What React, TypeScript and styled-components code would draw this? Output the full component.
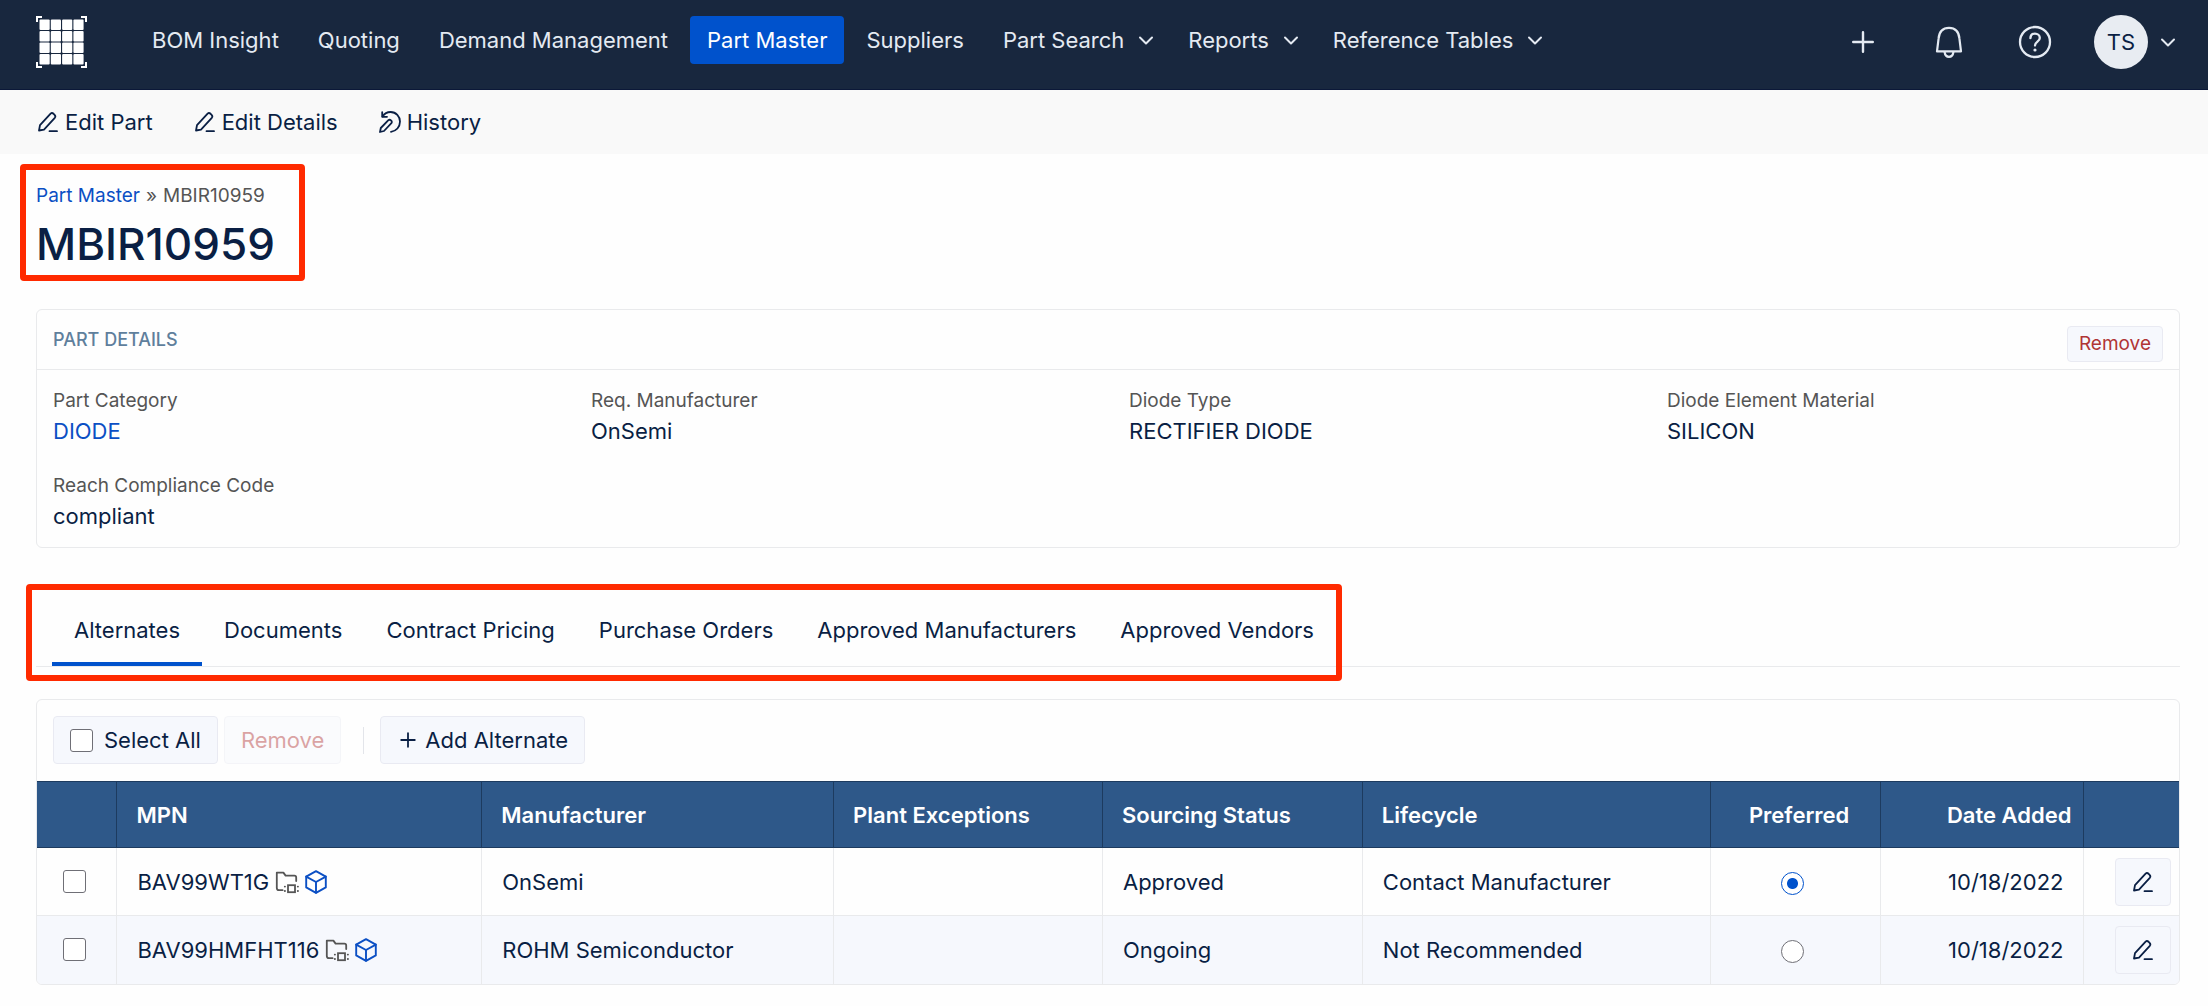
import React, { useState } from "react";
import styled, { createGlobalStyle, css } from "styled-components";

const GlobalStyle = createGlobalStyle`
  *, *::before, *::after { box-sizing: border-box; }
  body {
    margin: 0;
    background: #fefefe;
    color: #0a1f44;
    font-family: Inter, Roboto, "Liberation Sans", sans-serif;
    font-size: 22px;
    line-height: 28px;
  }
  button, input { font: inherit; color: inherit; }
  a { color: inherit; text-decoration: none; }
`;

/* ---------- icons ---------- */

const Svg = styled.svg`
  display: block;
  flex: none;
  fill: none;
  stroke: currentColor;
  stroke-linecap: round;
  stroke-linejoin: round;
`;

const Logo = () => (
  <Svg width="51" height="52" viewBox="0 0 51 52" aria-hidden="true">
    <g fill="#fff" stroke="none">
      {[0, 1, 2, 3].map((r) =>
        [0, 1, 2, 3].map((c) => (
          <rect key={`${r}-${c}`} x={3.5 + c * 11.3} y={3.4 + r * 11.5} width="10.2" height="10.5" rx="1" />
        ))
      )}
    </g>
    <path
      d="M1 6V1H6M45 1H50V6M50 46V51H45M6 51H1V46"
      stroke="#fff"
      strokeWidth="2"
      strokeLinecap="butt"
      strokeLinejoin="miter"
    />
  </Svg>
);

const ChevronIcon = () => (
  <Svg width="16" height="16" viewBox="0 0 16 16" strokeWidth="2" aria-hidden="true">
    <path d="M2 5.5L8 11.5L14 5.5" />
  </Svg>
);

const PencilIcon = () => (
  <Svg width="22" height="22" viewBox="0 0 22 22" strokeWidth="1.8" aria-hidden="true">
    <path d="M2 19.5L3 14.2L13.6 2.6Q15 1.4 16.6 2.8L17.6 3.8Q19 5.2 17.8 6.8L7 18.6Z" />
    <path d="M12.5 20.2H20" />
  </Svg>
);

const HistoryIcon = () => (
  <Svg width="22" height="22" viewBox="0 0 22 22" strokeWidth="1.8" aria-hidden="true">
    <path d="M3.2 1.2V5.8H8" />
    <path d="M3.6 5.4C5.6 2.2 8.8 1 11.6 1C17 1 21 5.4 21 10.6C21 16 17.2 20.2 12 20.8" />
    <path d="M1 21L1.8 17L9.4 9.2Q10.6 8.2 12 9.4Q13.4 10.8 12.4 12.2L5 20Z" />
  </Svg>
);

const PlusIcon = ({ small }: { small?: boolean }) => (
  <Svg width="22" height="22" viewBox="0 0 22 22" strokeWidth={small ? 1.8 : 2.4} aria-hidden="true">
    <path d={small ? "M11 4.2V17.8M4.2 11H17.8" : "M11 1.2V20.8M1.2 11H20.8"} />
  </Svg>
);

const BellIcon = () => (
  <Svg width="34" height="34" viewBox="0 0 34 34" strokeWidth="2.2" aria-hidden="true">
    <path d="M5 26.4L6.6 13.4C7.2 6.4 11 2.8 17 2.8S26.8 6.4 27.4 13.4L29 26.4Z" />
    <path d="M12.6 27Q13.2 31.8 17 31.8T21.4 27" />
  </Svg>
);

const HelpIcon = () => (
  <Svg width="34" height="34" viewBox="0 0 34 34" strokeWidth="2.3" aria-hidden="true">
    <circle cx="17" cy="17" r="15" />
    <path d="M12.4 13.2C12.4 10.2 14.4 8.6 17 8.6S21.8 10.4 21.8 13C21.8 16.8 17 16.6 17 20.6" />
    <circle cx="17" cy="25" r="1.6" fill="currentColor" stroke="none" />
  </Svg>
);

const FolderChipIcon = () => (
  <Svg width="24" height="24" viewBox="0 0 24 24" strokeWidth="1.8" aria-hidden="true">
    <path d="M7.6 20.2H4Q1.8 20.2 1.8 18V2.6H8.4L10.6 5.6H19.4Q21.2 5.6 21.2 7.4V11" />
    <rect x="13" y="15.2" width="7" height="7" strokeLinejoin="miter" />
    <path d="M9.8 16.6H10M9.8 21H10M22.8 16.6H23M22.8 21H23" />
  </Svg>
);

const CubeIcon = () => (
  <Svg width="24" height="24" viewBox="0 0 24 24" strokeWidth="1.9" aria-hidden="true">
    <path d="M12 1.2L21.8 6.6V17.4L12 22.8L2.2 17.4V6.6Z" />
    <path d="M2.2 6.6L12 12L21.8 6.6M12 12V22.8" />
  </Svg>
);

/* ---------- top bar ---------- */

const TopBar = styled.header`
  display: flex;
  align-items: flex-start;
  height: 90px;
  padding: 16px 32px 0 36px;
  background: #18273e;
  border-bottom: 1px solid #0b1838;
  color: #e4eaf2;
`;

const MainNav = styled.nav`
  display: flex;
  gap: 5px;
  margin-left: 48px;
`;

const navItem = css`
  display: flex;
  align-items: center;
  height: 48px;
  padding: 0 17px;
  border: 0;
  border-radius: 4px;
  background: none;
  white-space: nowrap;
`;

const NavLink = styled.a<{ $active?: boolean }>`
  ${navItem}
  ${({ $active }) => $active && css`background: #0052cc; color: #fff;`}
`;

const NavMenu = styled.button`
  ${navItem}
  gap: 14px;
  padding-right: 12px;
`;

const Tools = styled.div`
  display: flex;
  align-items: center;
  gap: 32px;
  height: 52px;
  margin-left: auto;
`;

const IconButton = styled.button`
  display: flex;
  align-items: center;
  justify-content: center;
  width: 54px;
  padding: 0;
  border: 0;
  background: none;
`;

const UserButton = styled(IconButton)`
  width: auto;
  gap: 12px;
`;

const Avatar = styled.span`
  display: grid;
  place-items: center;
  width: 54px;
  height: 54px;
  border-radius: 50%;
  background: #e8ecf2;
  color: #0a1f44;
`;

/* ---------- action bar ---------- */

const ActionBar = styled.div`
  display: flex;
  align-items: center;
  gap: 41px;
  height: 64px;
  padding: 0 37px;
  background: #f9f9f9;
`;

const Action = styled.button`
  display: flex;
  align-items: center;
  gap: 6px;
  padding: 0;
  border: 0;
  background: none;
`;

/* ---------- page ---------- */

const Page = styled.main`
  padding: 10px 28px 22px 20px;
`;

const highlight = css`
  border: 6px solid #ff2a00;
  border-radius: 4px;
`;

const Heading = styled.div`
  ${highlight}
  width: fit-content;
  height: 117px;
  padding: 12px 24px 0 10px;
`;

const Crumbs = styled.nav`
  display: flex;
  gap: 6px;
  color: #555;
  font-size: 19px;
`;

const Link = styled.a`
  color: #0b4fc4;
`;

const Title = styled.h1`
  margin: 6px 0 0;
  font-size: 44px;
  line-height: 56px;
  font-weight: 500;
`;

const Card = styled.section`
  margin-left: 16px;
  border: 1px solid #e9eaec;
  border-radius: 6px;
  overflow: hidden;
`;

const DetailsCard = styled(Card)`
  margin-top: 28px;
`;

const CardHead = styled.div`
  display: flex;
  justify-content: space-between;
  height: 60px;
  padding: 16px 16px 0;
  border-bottom: 1px solid #e9eaec;
`;

const CardTitle = styled.h2`
  margin: 0;
  color: #5f7f9c;
  font-size: 18px;
  line-height: 28px;
  font-weight: 500;
`;

const control = css`
  border: 1px solid #e9eaf2;
  border-radius: 4px;
  background: #f6f8fd;
`;

const SmallRemove = styled.button`
  ${control}
  height: 36px;
  padding: 0 11px;
  color: #b03535;
  font-size: 19px;
`;

const Details = styled.dl`
  display: grid;
  grid-template-columns: repeat(4, 1fr);
  gap: 27px 42px;
  margin: 0;
  padding: 17px 16px;
`;

const Term = styled.dt`
  color: #555;
  font-size: 19px;
`;

const Value = styled.dd`
  margin: 2px 0 0;
`;

const TabsArea = styled.div`
  position: relative;
  margin-top: 42px;
  padding-left: 16px;
`;

const TabList = styled.div`
  display: flex;
  height: 77px;
  padding-left: 16px;
  border-bottom: 1px solid #e9eaec;
`;

const Tab = styled.button<{ $active?: boolean }>`
  height: 76px;
  padding: 7px 22px 0;
  border: 0;
  border-bottom: 4px solid ${({ $active }) => ($active ? "#0052cc" : "transparent")};
  background: none;
  white-space: nowrap;
`;

const TabsMark = styled.div`
  ${highlight}
  position: absolute;
  left: 6px;
  top: -6px;
  width: 1316px;
  height: 97px;
  pointer-events: none;
`;

const TableCard = styled(Card)`
  margin-top: 32px;
`;

const Toolbar = styled.div`
  display: flex;
  align-items: center;
  padding: 16px 16px 17px;
`;

const ToolButton = styled.button`
  ${control}
  display: flex;
  align-items: center;
  gap: 6px;
  height: 48px;
  padding: 0 16px;
`;

const SelectAll = styled.label`
  ${control}
  display: flex;
  align-items: center;
  gap: 11px;
  height: 48px;
  padding: 0 16px;
`;

const BulkRemove = styled(ToolButton)`
  margin-left: 6px;
  color: #b03535;
  opacity: 0.45;
`;

const Separator = styled.span`
  width: 1px;
  height: 27px;
  margin: 0 16px 0 22px;
  background: #e3e5ea;
`;

const Check = styled.input`
  appearance: none;
  display: block;
  flex: none;
  width: 23px;
  height: 23px;
  margin: 0;
  border: 1px solid #6f6f76;
  border-radius: 3px;
  background: #fff;
  &:checked { background: #0052cc; }
`;

const Radio = styled.input`
  appearance: none;
  display: inline-block;
  vertical-align: middle;
  width: 23px;
  height: 23px;
  margin: 0;
  border: 1px solid #6f6f76;
  border-radius: 50%;
  background: #fff;
  &:checked {
    border-color: #0052cc;
    background: radial-gradient(circle, #0052cc 5px, #fff 6px);
  }
`;

const Table = styled.table`
  width: 100%;
  table-layout: fixed;
  border-collapse: collapse;
`;

const Th = styled.th<{ $align?: string; $pad?: string }>`
  height: 66px;
  padding: ${({ $pad }) => $pad ?? "0 19px"};
  border: solid #1d3b5f;
  border-width: 1px 0 1px 1px;
  background: #2e5889;
  color: #fff;
  font-weight: 600;
  text-align: ${({ $align }) => $align ?? "left"};
  white-space: nowrap;
  &:first-child { border-left: 0; }
`;

const Td = styled.td<{ $align?: string; $pad?: string }>`
  height: 68px;
  padding: ${({ $pad }) => $pad ?? "0 20px"};
  border-left: 1px solid #e9eaec;
  text-align: ${({ $align }) => $align ?? "left"};
  white-space: nowrap;
  &:first-child { border-left: 0; }
`;

const Row = styled.tr`
  & + & { border-top: 1px solid #e9eaec; }
  &:nth-child(even) { background: #f6f8fd; }
`;

const PartCell = styled.div`
  display: flex;
  align-items: center;
  gap: 6px;
`;

const PartIcons = styled.span`
  display: flex;
  gap: 5px;
`;

const Tinted = styled.span<{ $color: string }>`
  color: ${({ $color }) => $color};
`;

const EditButton = styled.button`
  ${control}
  display: inline-grid;
  place-items: center;
  vertical-align: middle;
  width: 56px;
  height: 48px;
  padding: 0;
`;

/* ---------- data ---------- */

const menus = ["Part Search", "Reports", "Reference Tables"];
const links = ["BOM Insight", "Quoting", "Demand Management", "Part Master", "Suppliers"];
const tabs = [
  "Alternates",
  "Documents",
  "Contract Pricing",
  "Purchase Orders",
  "Approved Manufacturers",
  "Approved Vendors",
];
const details = [
  { term: "Part Category", value: "DIODE", link: true },
  { term: "Req. Manufacturer", value: "OnSemi" },
  { term: "Diode Type", value: "RECTIFIER DIODE" },
  { term: "Diode Element Material", value: "SILICON" },
  { term: "Reach Compliance Code", value: "compliant" },
];
const columns = [80, 365, 352, 269, 260, 348, 170, 204, 95];
const total = columns.reduce((a, b) => a + b, 0);
const rows = [
  { mpn: "BAV99WT1G", maker: "OnSemi", status: "Approved", lifecycle: "Contact Manufacturer", date: "10/18/2022" },
  { mpn: "BAV99HMFHT116", maker: "ROHM Semiconductor", status: "Ongoing", lifecycle: "Not Recommended", date: "10/18/2022" },
];

export default function App() {
  const [tab, setTab] = useState("Alternates");
  const [preferred, setPreferred] = useState("BAV99WT1G");
  return (
    <>
      <GlobalStyle />
      <TopBar>
        <Logo />
        <MainNav aria-label="Main">
          {links.map((l) => (
            <NavLink key={l} href="#" $active={l === "Part Master"}>{l}</NavLink>
          ))}
          {menus.map((m) => (
            <NavMenu key={m} type="button">{m}<ChevronIcon /></NavMenu>
          ))}
        </MainNav>
        <Tools>
          <IconButton type="button" aria-label="Add"><PlusIcon /></IconButton>
          <IconButton type="button" aria-label="Notifications"><BellIcon /></IconButton>
          <IconButton type="button" aria-label="Help"><HelpIcon /></IconButton>
          <UserButton type="button">
            <Avatar>TS</Avatar>
            <ChevronIcon />
          </UserButton>
        </Tools>
      </TopBar>
      <ActionBar>
        <Action type="button"><PencilIcon />Edit Part</Action>
        <Action type="button"><PencilIcon />Edit Details</Action>
        <Action type="button"><HistoryIcon />History</Action>
      </ActionBar>
      <Page>
        <Heading>
          <Crumbs aria-label="Breadcrumb">
            <Link href="#">Part Master</Link>
            <span>»</span>
            <span>MBIR10959</span>
          </Crumbs>
          <Title>MBIR10959</Title>
        </Heading>
        <DetailsCard>
          <CardHead>
            <CardTitle>PART DETAILS</CardTitle>
            <SmallRemove type="button">Remove</SmallRemove>
          </CardHead>
          <Details>
            {details.map((d) => (
              <div key={d.term}>
                <Term>{d.term}</Term>
                <Value>{d.link ? <Link href="#">{d.value}</Link> : d.value}</Value>
              </div>
            ))}
          </Details>
        </DetailsCard>
        <TabsArea>
          <TabList role="tablist">
            {tabs.map((t) => (
              <Tab key={t} type="button" role="tab" aria-selected={t === tab} $active={t === tab} onClick={() => setTab(t)}>
                {t}
              </Tab>
            ))}
          </TabList>
          <TabsMark />
        </TabsArea>
        <TableCard>
          <Toolbar>
            <SelectAll><Check type="checkbox" />Select All</SelectAll>
            <BulkRemove type="button" disabled>Remove</BulkRemove>
            <Separator />
            <ToolButton type="button"><PlusIcon small />Add Alternate</ToolButton>
          </Toolbar>
          <Table>
            <colgroup>
              {columns.map((c, i) => (
                <col key={i} style={{ width: `${(c / total) * 100}%` }} />
              ))}
            </colgroup>
            <thead>
              <tr>
                <Th aria-label="Select" />
                <Th>MPN</Th>
                <Th>Manufacturer</Th>
                <Th>Plant Exceptions</Th>
                <Th>Sourcing Status</Th>
                <Th>Lifecycle</Th>
                <Th $align="center" $pad="0 0 0 8px">Preferred</Th>
                <Th $align="right" $pad="0 12px">Date Added</Th>
                <Th aria-label="Edit" />
              </tr>
            </thead>
            <tbody>
              {rows.map((r) => (
                <Row key={r.mpn}>
                  <Td $pad="0 0 0 26px"><Check type="checkbox" aria-label={`Select ${r.mpn}`} /></Td>
                  <Td>
                    <PartCell>
                      {r.mpn}
                      <PartIcons>
                        <Tinted $color="#555"><FolderChipIcon /></Tinted>
                        <Tinted $color="#0b4fc4"><CubeIcon /></Tinted>
                      </PartIcons>
                    </PartCell>
                  </Td>
                  <Td>{r.maker}</Td>
                  <Td />
                  <Td>{r.status}</Td>
                  <Td>{r.lifecycle}</Td>
                  <Td $align="center" $pad="0 6px 0 0">
                    <Radio
                      type="radio"
                      name="preferred"
                      aria-label={`Prefer ${r.mpn}`}
                      checked={preferred === r.mpn}
                      onChange={() => setPreferred(r.mpn)}
                    />
                  </Td>
                  <Td $align="right">{r.date}</Td>
                  <Td $align="right" $pad="0 8px 0 0">
                    <EditButton type="button" aria-label={`Edit ${r.mpn}`}><PencilIcon /></EditButton>
                  </Td>
                </Row>
              ))}
            </tbody>
          </Table>
        </TableCard>
      </Page>
    </>
  );
}
